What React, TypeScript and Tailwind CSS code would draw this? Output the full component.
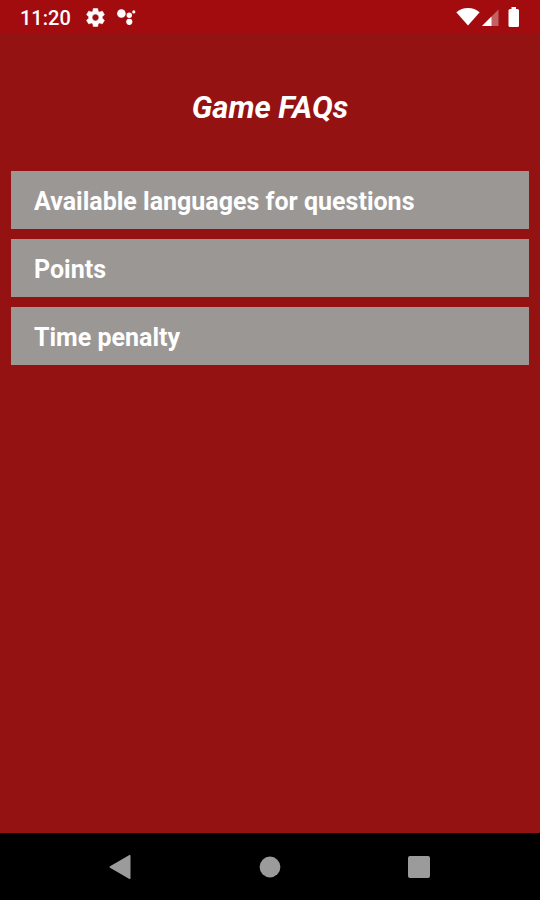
import { useState } from "react";

const topics = ["Available languages for questions", "Points", "Time penalty"];

function StatusBar() {
  return (
    <div className="flex h-[34px] items-center justify-between bg-[#a20c0e] px-5 text-white">
      <div className="flex items-center">
        <span className="w-[50px] pt-0.5 whitespace-nowrap text-[20px] leading-6 font-medium">
          11:20
        </span>

        {/* settings */}
        <svg
          viewBox="2 2 20 20"
          className="ml-4 size-[19px]"
          fill="currentColor"
          stroke="currentColor"
          strokeWidth="0.6"
          aria-hidden
        >
          <path d="M19.14 12.94c.04-.3.06-.61.06-.94 0-.32-.02-.64-.07-.94l2.03-1.58c.18-.14.23-.41.12-.61l-1.92-3.32c-.12-.22-.37-.29-.59-.22l-2.39.96c-.5-.38-1.03-.7-1.62-.94l-.36-2.54c-.04-.24-.24-.41-.48-.41h-3.84c-.24 0-.43.17-.47.41l-.36 2.54c-.59.24-1.13.57-1.62.94l-2.39-.96c-.22-.08-.47 0-.59.22L2.74 8.87c-.12.21-.08.47.12.61l2.03 1.58c-.05.3-.09.63-.09.94s.02.64.07.94l-2.03 1.58c-.18.14-.23.41-.12.61l1.92 3.32c.12.22.37.29.59.22l2.39-.96c.5.38 1.03.7 1.62.94l.36 2.54c.05.24.24.41.48.41h3.84c.24 0 .44-.17.47-.41l.36-2.54c.59-.24 1.13-.56 1.62-.94l2.39.96c.22.08.47 0 .59-.22l1.92-3.32c.12-.22.07-.47-.12-.61l-2.01-1.58zM12 15.6c-1.98 0-3.6-1.62-3.6-3.6s1.62-3.6 3.6-3.6 3.6 1.62 3.6 3.6-1.62 3.6-3.6 3.6z" />
        </svg>

        {/* assistant */}
        <svg
          viewBox="0 0 20 18"
          className="ml-3 h-[18px] w-5"
          fill="currentColor"
          aria-hidden
        >
          <circle cx="4.4" cy="5.5" r="4.3" />
          <circle cx="12.3" cy="7.2" r="2.7" />
          <circle cx="16.8" cy="3.9" r="1.6" />
          <circle cx="12.3" cy="13.8" r="3.1" />
        </svg>
      </div>

      <div className="flex items-center">
        <svg
          viewBox="0 0 24 18"
          className="h-[18px] w-6"
          fill="currentColor"
          aria-hidden
        >
          <path d="M12 17.5.3 4.2C3.6 1.6 7.6 0 12 0s8.400 1.6 11.700 4.2z" />
        </svg>
        <svg
          viewBox="0 0 17 17"
          className="ml-[2px] size-[17px]"
          fill="currentColor"
          aria-hidden
        >
          <path d="M16.500 .5V17H0z" opacity=".35" />
          <path d="M9.500 7.500V17H0z" />
        </svg>
        <svg
          viewBox="0 0 12 20"
          className="ml-[9px] h-5 w-3"
          fill="currentColor"
          aria-hidden
        >
          <path d="M3.500 0h4.500v2H9.500A1.500 1.500 0 0 1 11 3.500v15A1.500 1.500 0 0 1 9.500 20H2A1.500 1.500 0 0 1 .5 18.500v-15A1.500 1.500 0 0 1 2 2h1.500z" />
        </svg>
      </div>
    </div>
  );
}

function NavBar() {
  return (
    <nav className="grid h-[67px] grid-cols-3 place-items-center bg-black px-[45px] text-[#9b9b9b]">
      <button type="button" aria-label="Back">
        <svg viewBox="0 0 24 24" className="size-6" fill="currentColor">
          <path d="M22.500 1v22a1 1 0 0 1-1.500.8L2 12.800a1 1 0 0 1 0-1.600L21 .2a1 1 0 0 1 1.500.8z" />
        </svg>
      </button>
      <button type="button" aria-label="Home">
        <svg viewBox="0 0 24 24" className="size-6" fill="currentColor">
          <circle cx="12" cy="12" r="10.400" />
        </svg>
      </button>
      <button type="button" aria-label="Recent apps">
        <svg viewBox="0 0 24 24" className="size-6" fill="currentColor">
          <rect x="0" y="1" width="22" height="22" rx="2" />
        </svg>
      </button>
    </nav>
  );
}

export default function App() {
  const [selected, setSelected] = useState("");

  return (
    <div className="flex min-h-screen flex-col bg-[#951212] font-[Roboto,sans-serif]">
      <StatusBar />

      <main className="flex-1 px-[11px] pt-[54px]">
        <h1 className="text-center text-[31px] leading-10 font-bold italic text-white">
          Game FAQs
        </h1>

        <ul className="mt-[43px] flex flex-col gap-[10px]">
          {topics.map((topic) => (
            <li key={topic}>
              <button
                type="button"
                aria-pressed={selected === topic}
                onClick={() => setSelected(selected === topic ? "" : topic)}
                className="flex h-[58px] w-full items-center bg-[#9b9795] px-[23px] pt-1 text-left text-[25px] leading-8 font-bold text-white"
              >
                {topic}
              </button>
            </li>
          ))}
        </ul>
      </main>

      <NavBar />
    </div>
  );
}
